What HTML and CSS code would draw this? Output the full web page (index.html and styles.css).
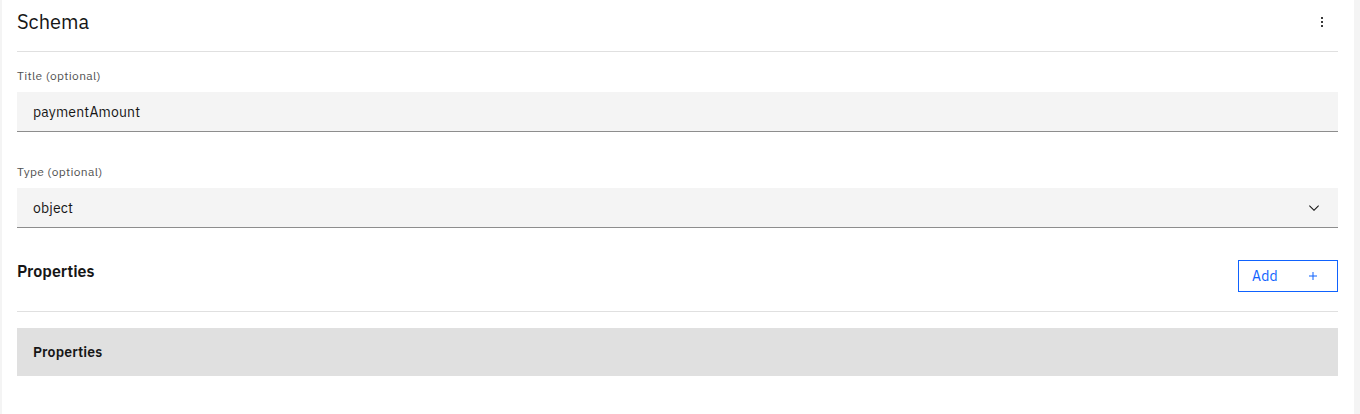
FILE: index.html
```html
<!DOCTYPE html>
<html lang="en">
<head>
<meta charset="utf-8">
<title>Schema</title>
<link rel="stylesheet" href="styles.css">
</head>
<body>
<div class="panel">
  <header class="panel-header">
    <h2 class="panel-title">Schema</h2>
    <button class="icon-btn" aria-label="Options">
      <svg width="16" height="16" viewBox="0 0 16 16" fill="#393939"><rect x="7" y="3" width="2" height="2"/><rect x="7" y="7" width="2" height="2"/><rect x="7" y="11" width="2" height="2"/></svg>
    </button>
  </header>

  <div class="field">
    <label class="field-label">Title (optional)</label>
    <div class="input">paymentAmount</div>
  </div>

  <div class="field">
    <label class="field-label">Type (optional)</label>
    <div class="input select">
      <span>object</span>
      <svg class="chevron" width="16" height="16" viewBox="0 0 16 16" fill="#161616"><path d="M8 11L3 6 3.7 5.3 8 9.6 12.3 5.3 13 6z"/></svg>
    </div>
  </div>

  <div class="section-head">
    <h3 class="section-title">Properties</h3>
    <button class="btn-tertiary">
      <span>Add</span>
      <svg width="16" height="16" viewBox="0 0 16 16" fill="#0f62fe"><path d="M8.5 4h-1v3.5H4v1h3.5V12h1V8.5H12v-1H8.5z"/></svg>
    </button>
  </div>

  <div class="table-head">Properties</div>
</div>
</body>
</html>
```

FILE: styles.css
```css
* { box-sizing: border-box; }
html, body { margin: 0; padding: 0; }
body {
  background: #f4f4f4;
  font-family: "IBM Plex Sans", "Noto Sans", sans-serif;
  color: #161616;
  height: 414px;
  overflow: hidden;
}
.panel {
  margin-left: 2px;
  width: 1352px;
  height: 414px;
  background: #fff;
  padding: 0 16px 0 15px;
}
.panel-header {
  display: flex;
  align-items: center;
  justify-content: space-between;
  height: 52px;
  padding: 0 0 8px;
  border-bottom: 1px solid #e0e0e0;
}
.panel-title {
  margin: 0;
  font-size: 20px;
  line-height: 28px;
  font-weight: 400;
  color: #161616;
}
.icon-btn {
  width: 32px;
  height: 32px;
  border: 0;
  background: transparent;
  padding: 0;
  display: flex;
  align-items: center;
  justify-content: center;
  margin-right: 0;
}
.field { padding-top: 16px; }
.field + .field { padding-top: 32px; }
.field-label {
  display: block;
  font-size: 12px;
  line-height: 16px;
  letter-spacing: 0.32px;
  color: #525252;
  margin-bottom: 8px;
}
.input {
  height: 40px;
  background: #f4f4f4;
  border-bottom: 1px solid #8d8d8d;
  padding: 0 16px;
  display: flex;
  align-items: center;
  font-size: 14px;
  letter-spacing: 0.16px;
  color: #161616;
}
.select { justify-content: space-between; }
.chevron { margin-right: 0; }
.section-head {
  display: flex;
  justify-content: space-between;
  align-items: flex-start;
  margin-top: 32px;
  padding-bottom: 19px;
  border-bottom: 1px solid #e0e0e0;
}
.section-title {
  margin: 0;
  font-size: 16px;
  line-height: 22px;
  font-weight: 600;
  color: #161616;
}
.btn-tertiary {
  width: 100px;
  height: 32px;
  border: 1px solid #0f62fe;
  background: #fff;
  color: #0f62fe;
  font-family: inherit;
  font-size: 14px;
  letter-spacing: 0.16px;
  display: flex;
  align-items: center;
  justify-content: space-between;
  padding: 0 16px 0 13px;
}
.table-head {
  margin-top: 16px;
  height: 48px;
  background: #e0e0e0;
  display: flex;
  align-items: center;
  padding: 0 16px;
  font-size: 14px;
  font-weight: 600;
  letter-spacing: 0.16px;
  color: #161616;
}
```
